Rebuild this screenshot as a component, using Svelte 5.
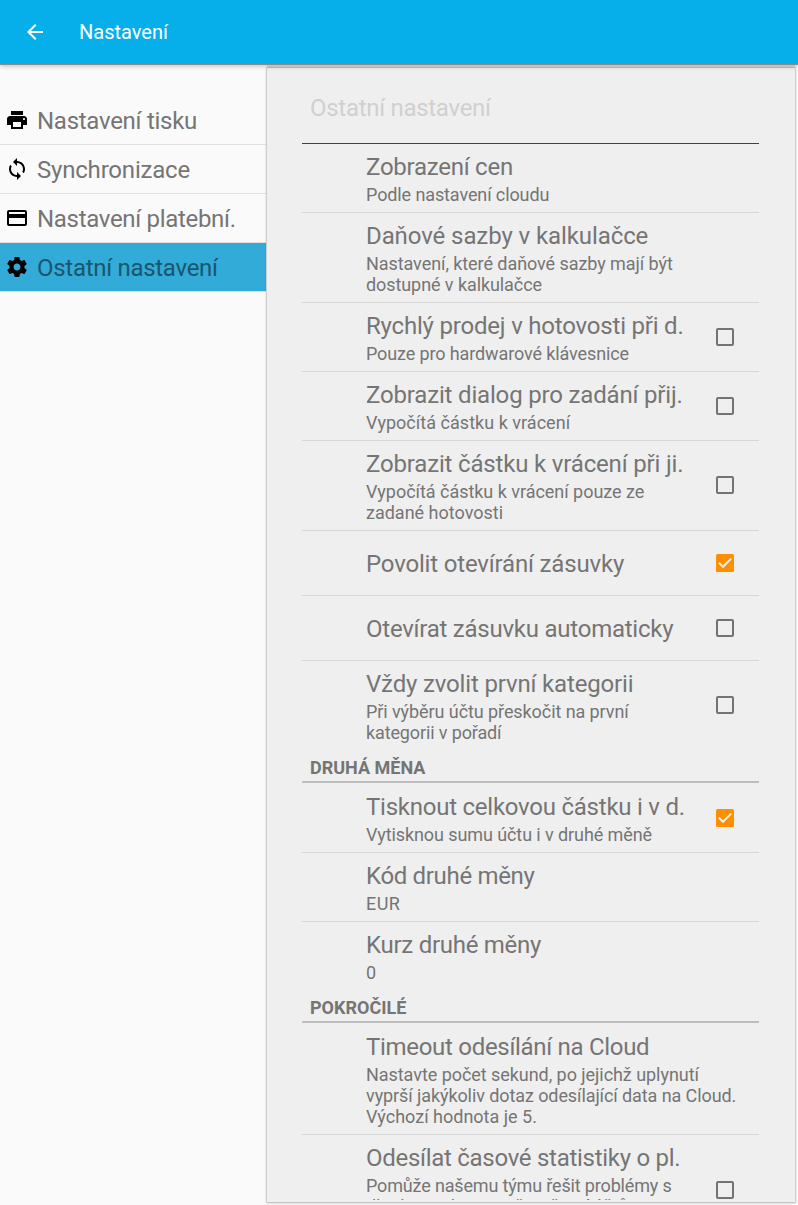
<script>
  const menu = [
    { icon: 'print', label: 'Nastavení tisku', spacing: -0.27 },
    { icon: 'sync', label: 'Synchronizace', spacing: -0.2 },
    { icon: 'card', label: 'Nastavení platební.', spacing: -0.31 },
    { icon: 'gear', label: 'Ostatní nastavení', spacing: -0.29, active: true }
  ];
  const paths = {
    print: 'M19 8H5c-1.66 0-3 1.34-3 3v6h4v4h12v-4h4v-6c0-1.66-1.34-3-3-3zm-3 11H8v-5h8v5zm3-7c-.55 0-1-.45-1-1s.45-1 1-1 1 .45 1 1-.45 1-1 1zm-1-9H6v4h12V3z',
    sync: 'M12 4V1L8 5l4 4V6c3.31 0 6 2.69 6 6 0 1.01-.25 1.97-.7 2.8l1.46 1.46C19.54 15.03 20 13.57 20 12c0-4.42-3.58-8-8-8zm0 14c-3.31 0-6-2.69-6-6 0-1.01.25-1.97.7-2.8L5.24 7.74C4.46 8.97 4 10.43 4 12c0 4.42 3.58 8 8 8v3l4-4-4-4v3z',
    card: 'M20 4H4c-1.11 0-1.99.89-1.99 2L2 18c0 1.11.89 2 2 2h16c1.11 0 2-.89 2-2V6c0-1.11-.89-2-2-2zm0 14H4v-6h16v6zm0-10H4V6h16v2z',
    gear: 'M19.43 12.98c.04-.32.07-.64.07-.98s-.03-.66-.07-.98l2.11-1.65c.19-.15.24-.42.12-.64l-2-3.46c-.12-.22-.39-.3-.61-.22l-2.49 1c-.52-.4-1.08-.73-1.69-.98l-.38-2.65C14.46 2.18 14.25 2 14 2h-4c-.25 0-.46.18-.49.42l-.38 2.65c-.61.25-1.17.59-1.69.98l-2.49-1c-.23-.09-.49 0-.61.22l-2 3.46c-.13.22-.07.49.12.64l2.11 1.65c-.04.32-.07.65-.07.98s.03.66.07.98l-2.11 1.65c-.19.15-.24.42-.12.64l2 3.46c.12.22.39.3.61.22l2.49-1c.52.4 1.08.73 1.69.98l.38 2.65c.03.24.24.42.49.42h4c.25 0 .46-.18.49-.42l.38-2.65c.61-.25 1.17-.59 1.69-.98l2.49 1c.23.09.49 0 .61-.22l2-3.46c.12-.22.07-.49-.12-.64l-2.11-1.65zM12 15.5c-1.93 0-3.5-1.57-3.5-3.5s1.57-3.5 3.5-3.5 3.5 1.57 3.5 3.5-1.57 3.5-3.5 3.5z'
  };
  // Every text is paired with its letter spacing in pixels.
  const sections = [
    {
      rows: [
        { title: ['Zobrazení cen', -0.25], lines: [['Podle nastavení cloudu', -0.11]] },
        { title: ['Daňové sazby v kalkulačce', -0.09], lines: [['Nastavení, které daňové sazby mají být', -0.07], ['dostupné v kalkulačce', -0.08]] },
        { title: ['Rychlý prodej v hotovosti při d.', -0.2], lines: [['Pouze pro hardwarové klávesnice', -0.12]], box: 'off' },
        { title: ['Zobrazit dialog pro zadání přij.', -0.17], lines: [['Vypočítá částku k vrácení', 0.03]], box: 'off' },
        { title: ['Zobrazit částku k vrácení při ji.', -0.17], lines: [['Vypočítá částku k vrácení pouze ze', -0.03], ['zadané hotovosti', 0]], box: 'off' },
        { title: ['Povolit otevírání zásuvky', -0.17], lines: [], box: 'on' },
        { title: ['Otevírat zásuvku automaticky', -0.24], lines: [], box: 'off' },
        { title: ['Vždy zvolit první kategorii', -0.16], lines: [['Při výběru účtu přeskočit na první', -0.08], ['kategorii v pořadí', -0.13]], box: 'off' }
      ]
    },
    {
      name: 'DRUHÁ MĚNA',
      rows: [
        { title: ['Tisknout celkovou částku i v d.', -0.24], lines: [['Vytisknou sumu účtu i v druhé měně', -0.09]], box: 'on' },
        { title: ['Kód druhé měny', -0.33], lines: [['EUR', 0.4]] },
        { title: ['Kurz druhé měny', -0.27], lines: [['0', 0]] }
      ]
    },
    {
      name: 'POKROČILÉ',
      rows: [
        { title: ['Timeout odesílání na Cloud', -0.3], lines: [['Nastavte počet sekund, po jejichž uplynutí', -0.05], ['vyprší jakýkoliv dotaz odesílající data na Cloud.', -0.09], ['Výchozí hodnota je 5.', 0]] },
        { title: ['Odesílat časové statistiky o pl.', -0.28], lines: [['Pomůže našemu týmu řešit problémy s', -0.16], ['dlouhou odezvou při načtení účtů', -0.1]], box: 'off', tall: true }
      ]
    }
  ];
</script>

<div class="screen">
  <header>
    <svg class="back" viewBox="0 0 24 24"><path d="M20 11H7.83l5.59-5.59L12 4l-8 8 8 8 1.41-1.41L7.83 13H20v-2z" /></svg>
    <h1>Nastavení</h1>
  </header>
  <div class="body">
    <nav>
      {#each menu as item}
        <div class="item" class:active={item.active}>
          <svg viewBox="0 0 24 24"><path d={paths[item.icon]} /></svg>
          <span style:letter-spacing="{item.spacing}px">{item.label}</span>
        </div>
      {/each}
    </nav>
    <main>
      <div class="list">
        <h2>Ostatní nastavení</h2>
        {#each sections as section}
          {#if section.name}<h3>{section.name}</h3>{/if}
          <div class="rows">
            {#each section.rows as row}
              <div class="row" class:single={row.lines.length === 0} class:tall={row.tall}>
                <div class="text">
                  <div class="title" style:letter-spacing="{row.title[1]}px">{row.title[0]}</div>
                  {#each row.lines as line}<div class="line" style:letter-spacing="{line[1]}px">{line[0]}</div>{/each}
                </div>
                {#if row.box}
                  <svg class="box" viewBox="0 0 18 18">
                    {#if row.box === 'on'}
                      <rect width="18" height="18" rx="1.5" fill="#ff8f00" />
                      <path d="M2.8 8.6 7 12.8 15.2 4.6" fill="none" stroke="#efefef" stroke-width="2" />
                    {:else}
                      <rect x="1" y="1" width="16" height="16" rx="1" fill="none" stroke="#737373" stroke-width="2" />
                    {/if}
                  </svg>
                {/if}
              </div>
            {/each}
          </div>
        {/each}
      </div>
    </main>
  </div>
</div>

<style>
  :global(body) { margin: 0; background: #fafafa; }
  .screen { width: 798px; height: 1205px; display: flex; flex-direction: column; overflow: hidden; background: #fafafa; font-family: Roboto, sans-serif; color: #757575; }
  h1, h2, h3 { margin: 0; font-weight: 400; }
  header { height: 64px; flex: none; display: flex; align-items: center; background: #06afe9; box-shadow: 0 1px 0 #8b8b8b, 0 2px 5px rgba(0, 0, 0, 0.26); z-index: 1; }
  .back { width: 24px; height: 24px; margin-left: 23px; fill: #fff; }
  h1 { margin-left: 32px; font-size: 20px; color: #fff; }
  .body { flex: 1; display: flex; min-height: 0; }
  nav { width: 266px; flex: none; padding-top: 32px; }
  .item { box-sizing: border-box; height: 49px; display: flex; align-items: center; padding-left: 5px; border-bottom: 1px solid #dfdfdf; font-size: 24px; white-space: nowrap; }
  .item svg { width: 24px; height: 24px; margin-right: 8px; }
  .item span { padding-top: 2px; }
  .item.active { background: #33abd8; color: #19566d; }
  main { box-sizing: border-box; width: 528px; height: 1134px; margin: 4px 0 0 1px; padding: 0 36px 2px 35px; background: #efefef; box-shadow: 0 0 1px 1px rgba(0, 0, 0, 0.12), 0 1px 3px rgba(0, 0, 0, 0.16), 0 -3px 0 #e2e2e2; }
  .list { height: 1132px; overflow: hidden; }
  h2 { box-sizing: border-box; height: 76px; padding: 26px 8px 0; border-bottom: 1px solid #404040; font-size: 24px; line-height: 28px; letter-spacing: -0.29px; color: #d0d0d0; }
  h3 { box-sizing: border-box; height: 33px; margin-bottom: 1px; padding: 7px 8px 0; border-bottom: 2px solid #bdbdbd; font-size: 18px; line-height: 21px; font-weight: 700; }
  .row { display: flex; align-items: center; padding: 9px 25px 7px 64px; border-bottom: 1px solid #d6d6d6; white-space: nowrap; }
  .row:last-child { border-bottom: 0; }
  .row.single { height: 48px; }
  .text { flex: 1; min-width: 0; }
  .tall .text { min-height: 94px; }
  .title { margin-bottom: 3px; font-size: 24px; line-height: 28px; }
  .single .title { margin-bottom: 0; }
  .line { font-size: 18px; line-height: 21px; }
  .box { width: 18px; height: 18px; flex: none; margin: -3px 0 0; }
</style>
